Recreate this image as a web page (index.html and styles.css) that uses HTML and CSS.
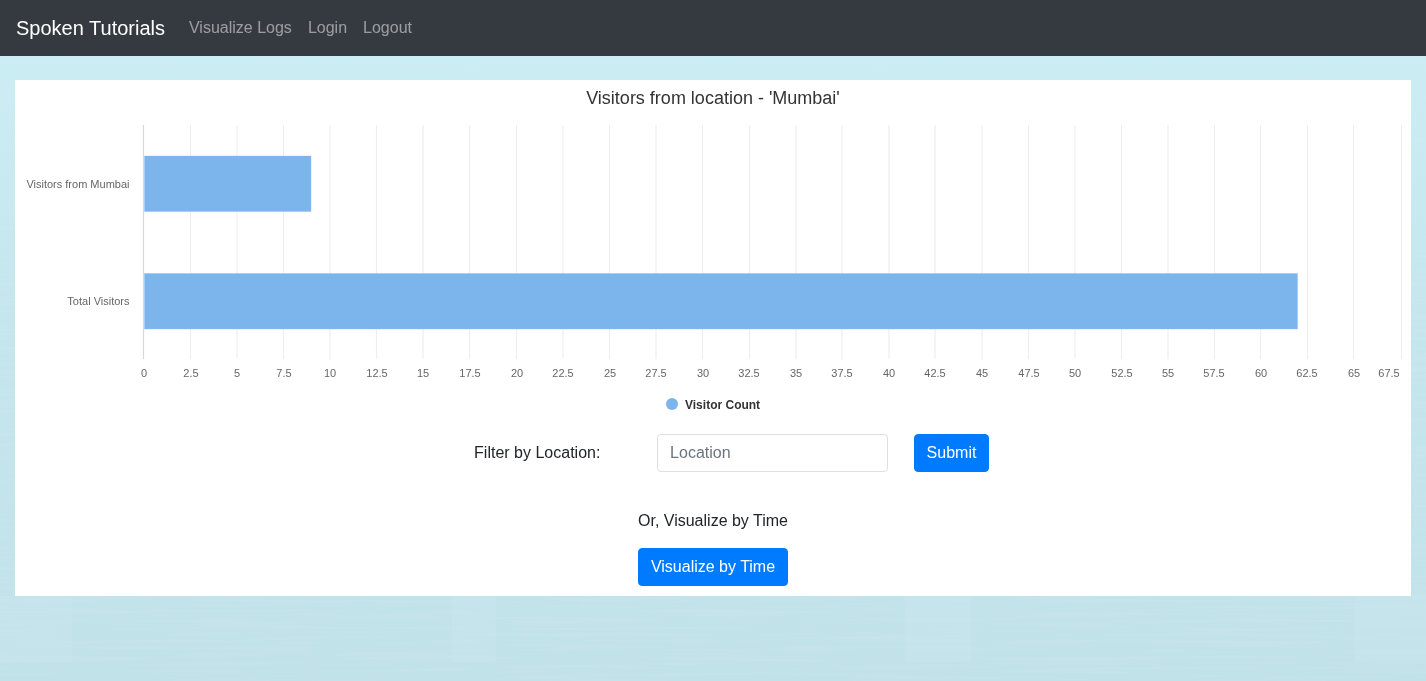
FILE: index.html
```html
<!DOCTYPE html>
<html lang="en">
<head>
    <meta charset="UTF-8">
    <meta name="viewport" content="width=device-width, initial-scale=1.0">
    <title>Spoken Tutorials</title>
    <link rel="stylesheet" href="styles.css">
</head>
<body>
    <!-- faint wood-grain backdrop -->
    <svg class="backdrop" width="1426" height="681" viewBox="0 0 1426 681" aria-hidden="true">
        <filter id="grain" x="0" y="0" width="100%" height="100%">
            <feTurbulence type="fractalNoise" baseFrequency="0.006 0.3" numOctaves="3" seed="7"/>
            <feColorMatrix type="matrix" values="0 0 0 0 1  0 0 0 0 1  0 0 0 0 1  1.1 0 0 0 -0.42"/>
        </filter>
        <rect class="patch" x="0" y="596" width="72" height="66"/>
        <rect class="patch" x="452" y="596" width="44" height="66"/>
        <rect class="patch" x="905" y="596" width="66" height="66"/>
        <rect class="patch" x="1355" y="596" width="71" height="66"/>
        <rect width="1426" height="681" filter="url(#grain)" opacity="0.1"/>
    </svg>
    <nav class="navbar">
        <a class="navbar-brand" href="#">Spoken Tutorials</a>
        <a class="nav-link" href="#">Visualize Logs</a>
        <a class="nav-link" href="#">Login</a>
        <a class="nav-link" href="#">Logout</a>
    </nav>
    <main class="page">
        <section class="card">
            <h2 class="chart-title">Visitors from location - 'Mumbai'</h2>
            <!-- coordinates: x is page x - 15, y is page y - 115 -->
            <svg class="chart" width="1396" height="303" viewBox="0 0 1396 303">
                <g class="grid">
                    <line x1="175.5" x2="175.5" y1="10" y2="244"/>
                    <line x1="222" x2="222" y1="10" y2="244"/>
                    <line x1="268.5" x2="268.5" y1="10" y2="244"/>
                    <line x1="315" x2="315" y1="10" y2="244"/>
                    <line x1="361.5" x2="361.5" y1="10" y2="244"/>
                    <line x1="408" x2="408" y1="10" y2="244"/>
                    <line x1="454.5" x2="454.5" y1="10" y2="244"/>
                    <line x1="501.5" x2="501.5" y1="10" y2="244"/>
                    <line x1="548" x2="548" y1="10" y2="244"/>
                    <line x1="594.5" x2="594.5" y1="10" y2="244"/>
                    <line x1="641" x2="641" y1="10" y2="244"/>
                    <line x1="687.5" x2="687.5" y1="10" y2="244"/>
                    <line x1="734.5" x2="734.5" y1="10" y2="244"/>
                    <line x1="781" x2="781" y1="10" y2="244"/>
                    <line x1="827" x2="827" y1="10" y2="244"/>
                    <line x1="874" x2="874" y1="10" y2="244"/>
                    <line x1="920" x2="920" y1="10" y2="244"/>
                    <line x1="967" x2="967" y1="10" y2="244"/>
                    <line x1="1013.5" x2="1013.5" y1="10" y2="244"/>
                    <line x1="1060" x2="1060" y1="10" y2="244"/>
                    <line x1="1106.5" x2="1106.5" y1="10" y2="244"/>
                    <line x1="1153" x2="1153" y1="10" y2="244"/>
                    <line x1="1199.5" x2="1199.5" y1="10" y2="244"/>
                    <line x1="1245.5" x2="1245.5" y1="10" y2="244"/>
                    <line x1="1292.5" x2="1292.5" y1="10" y2="244"/>
                    <line x1="1338.5" x2="1338.5" y1="10" y2="244"/>
                    <line x1="1386.5" x2="1386.5" y1="10" y2="244"/>
                </g>
                <line class="axis" x1="128.5" x2="128.5" y1="10" y2="244"/>
                <rect class="bar" x="129.5" y="41" width="166.5" height="55.5"/>
                <rect class="bar" x="129.5" y="158.5" width="1153" height="55.5"/>
                <text class="y-label" x="114.5" y="73">Visitors from Mumbai</text>
                <text class="y-label" x="114.5" y="190">Total Visitors</text>
                <g class="x-labels">
                    <text x="129" y="262">0</text>
                    <text x="176" y="262">2.5</text>
                    <text x="222" y="262">5</text>
                    <text x="269" y="262">7.5</text>
                    <text x="315" y="262">10</text>
                    <text x="362" y="262">12.5</text>
                    <text x="408" y="262">15</text>
                    <text x="455" y="262">17.5</text>
                    <text x="502" y="262">20</text>
                    <text x="548" y="262">22.5</text>
                    <text x="595" y="262">25</text>
                    <text x="641" y="262">27.5</text>
                    <text x="688" y="262">30</text>
                    <text x="734" y="262">32.5</text>
                    <text x="781" y="262">35</text>
                    <text x="827" y="262">37.5</text>
                    <text x="874" y="262">40</text>
                    <text x="920" y="262">42.5</text>
                    <text x="967" y="262">45</text>
                    <text x="1014" y="262">47.5</text>
                    <text x="1060" y="262">50</text>
                    <text x="1107" y="262">52.5</text>
                    <text x="1153" y="262">55</text>
                    <text x="1199" y="262">57.5</text>
                    <text x="1246" y="262">60</text>
                    <text x="1292" y="262">62.5</text>
                    <text x="1339" y="262">65</text>
                    <text x="1374" y="262">67.5</text>
                </g>
                <circle class="legend-dot" cx="657" cy="289" r="6"/>
                <text class="legend-text" x="670" y="294">Visitor Count</text>
            </svg>
            <form class="filter-form">
                <label class="filter-label" for="location">Filter by Location:</label>
                <input class="form-control" type="text" id="location" placeholder="Location">
                <button class="btn btn-submit" type="button">Submit</button>
            </form>
            <p class="time-text">Or, Visualize by Time</p>
            <button class="btn" type="button">Visualize by Time</button>
        </section>
    </main>
</body>
</html>
```

FILE: styles.css
```css
* {
    box-sizing: border-box;
}
body {
    margin: 0;
    min-height: 100vh;
    font-family: "Liberation Sans", Arial, sans-serif;
    font-size: 16px;
    color: #212529;
    background: linear-gradient(#cbedf4 56px, #c6e6ee 300px, #c2e2ea 681px);
}
.backdrop {
    position: fixed;
    top: 0;
    left: 0;
    z-index: -1;
}
.patch {
    fill: #fff;
    opacity: 0.05;
}
.navbar {
    display: flex;
    align-items: center;
    height: 56px;
    padding: 0 16px;
    background: #343a40;
}
.navbar a {
    text-decoration: none;
}
.navbar-brand {
    font-size: 20px;
    color: #fff;
    margin-right: 16px;
}
.nav-link {
    padding: 0 8px;
    color: rgba(255, 255, 255, 0.5);
}
.page {
    padding: 24px 15px;
}
.card {
    display: flex;
    flex-direction: column;
    align-items: center;
    height: 516px;
    background: #fff;
}
.chart-title {
    margin: 8px 0 0;
    height: 27px;
    font-size: 18px;
    font-weight: 400;
    line-height: 21px;
    color: #333;
}
.chart {
    display: block;
    filter: blur(0.3px);
}
.grid line {
    stroke: #eeeeee;
    stroke-width: 1.2;
}
.axis {
    stroke: #d5d9de;
    stroke-width: 1.2;
}
.bar {
    fill: #7cb4ec;
    stroke: #8fbfef;
    stroke-width: 0.4;
}
.chart text {
    font-family: "Liberation Sans", Arial, sans-serif;
    font-size: 11px;
    fill: #666;
}
.y-label {
    text-anchor: end;
}
.x-labels text {
    text-anchor: middle;
}
.legend-dot {
    fill: #7cb4ec;
}
.chart .legend-text {
    font-weight: 700;
    font-size: 12px;
    fill: #333;
}
.filter-form {
    display: flex;
    align-items: center;
    margin-top: 16px;
    padding-left: 37px;
}
.filter-label {
    width: 183px;
}
.form-control {
    width: 231px;
    height: 38px;
    padding: 6px 12px;
    margin-right: 26px;
    font: inherit;
    color: #495057;
    border: 1px solid #dcdfe3;
    border-radius: 4px;
}
.form-control::placeholder {
    color: #6c757d;
}
.btn {
    height: 38px;
    padding: 6px 12px;
    font: inherit;
    color: #fff;
    background: #007bff;
    border: 1px solid #007bff;
    border-radius: 4px;
}
.btn-submit {
    padding: 6px 11.5px;
}
.time-text {
    margin: 39px 0 18px;
    line-height: 19px;
}
```
